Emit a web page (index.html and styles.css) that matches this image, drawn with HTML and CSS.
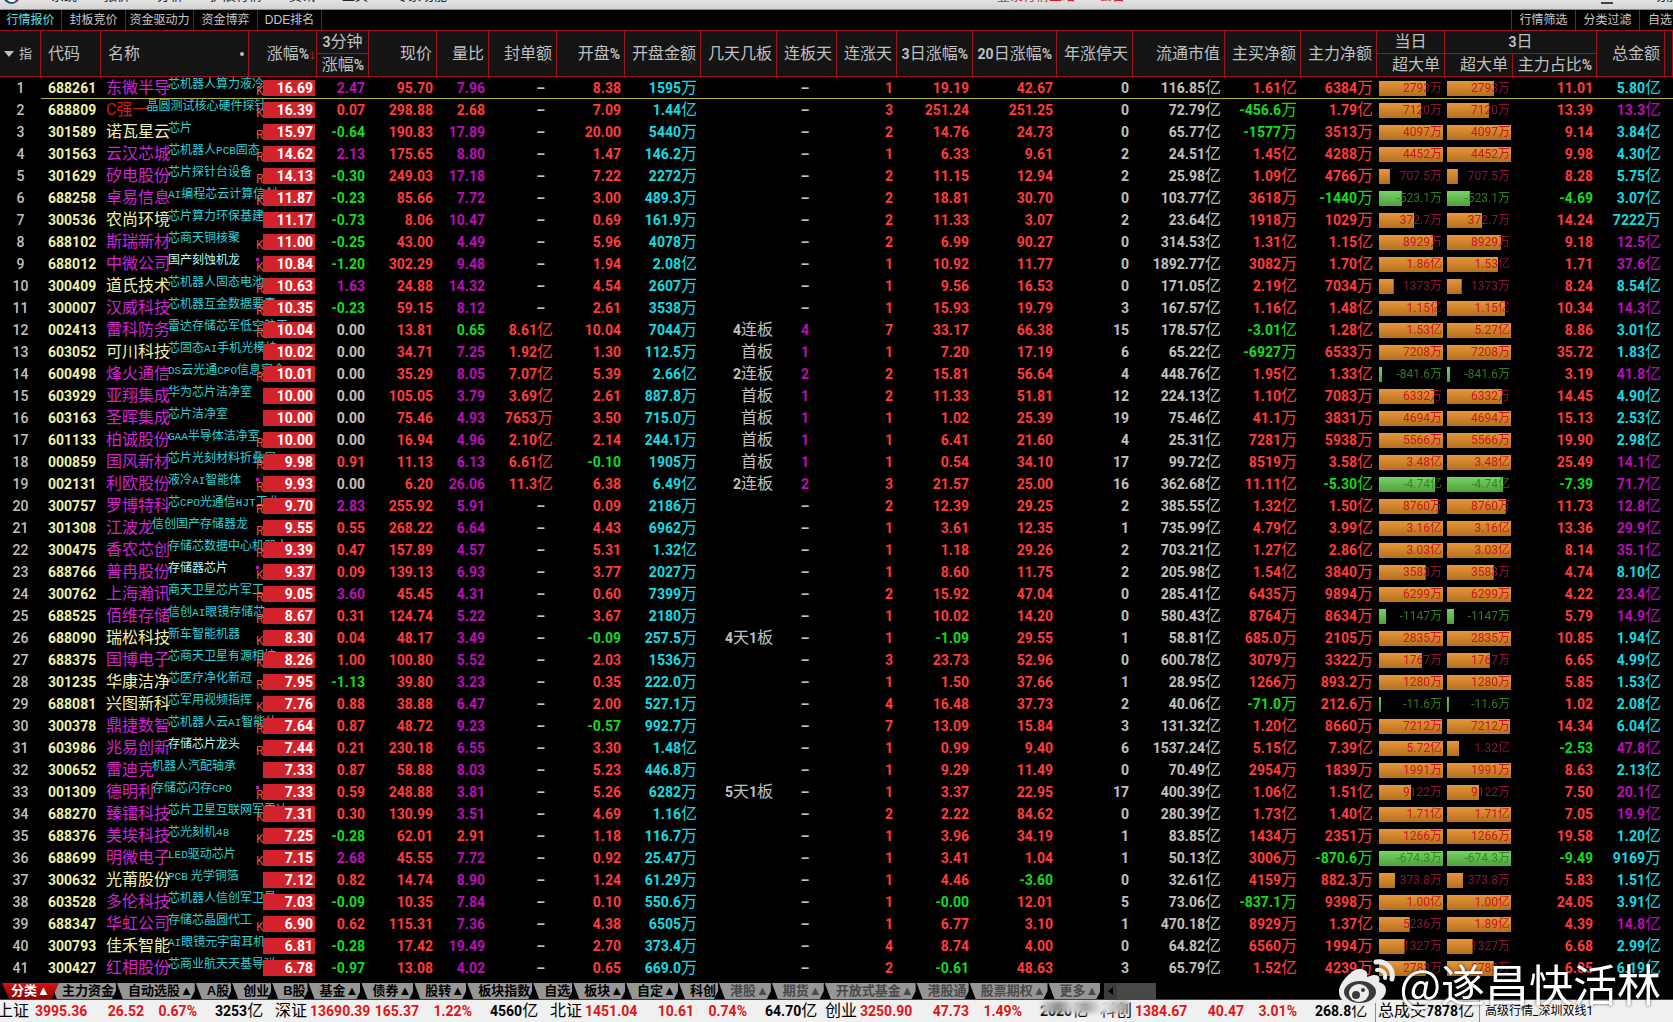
FILE: index.html
```html
<!DOCTYPE html>
<html lang="zh-CN">
  <head>
    <meta charset="UTF-8" />
    <meta name="viewport" content="width=device-width, initial-scale=1.0" />
    <title>行情报价</title>
    <link rel="stylesheet" href="styles.css">
  </head>
  <body>
    <!-- 顶部菜单 -->
    <header class="menu-bar">
      <svg class="menu-logo" viewBox="0 0 18 18">
        <circle cx="9" cy="9" r="9" fill="#1d4f8c" />
        <path d="M9 0a9 9 0 0 1 6 15L8 10z" fill="#d01c2c" />
        <path d="M3 8q6 8 11 3l-1 4q-6 3-10-3z" fill="#ffffff" />
      </svg>
      <nav class="menu-items">
        <a href="#">系统</a>
        <a href="#">报价</a>
        <a href="#">分析</a>
        <a href="#">扩展行情</a>
        <a href="#">资讯</a>
        <a href="#">工具</a>
        <a href="#">专家功能</a>
      </nav>
      <span class="menu-notice">登录行情主站</span>
      <span class="menu-notice-sub">公告</span>
      <span class="menu-min"></span>
      <a class="menu-end" href="#">功能</a>
    </header>

    <!-- 子页签 -->
    <nav class="sub-tabs">
      <button class="sub-tab active">行情报价</button>
      <button class="sub-tab">封板竞价</button>
      <button class="sub-tab wide">资金驱动力</button>
      <button class="sub-tab">资金博弈</button>
      <button class="sub-tab">DDE排名</button>
      <span class="spacer"></span>
      <button class="sub-tab tool">行情筛选</button>
      <button class="sub-tab tool">分类过滤</button>
      <button class="sub-tab tool last">自选管理</button>
    </nav>

    <!-- 行情表格 -->
    <main>
      <table class="quote-table">
        <colgroup>
          <col class="w-index" />
          <col class="w-60" />
          <col class="w-name" />
          <col class="w-68" />
          <col class="w-52" />
          <col class="w-68" />
          <col class="w-52" />
          <col class="w-68" />
          <col class="w-68" />
          <col class="w-76" />
          <col class="w-76" />
          <col class="w-60" />
          <col class="w-60" />
          <col class="w-76" />
          <col class="w-84" />
          <col class="w-76" />
          <col class="w-92" />
          <col class="w-76" />
          <col class="w-76" />
          <col class="w-68" />
          <col class="w-68" />
          <col class="w-84" />
          <col class="w-68" />
          <col />
        </colgroup>
        <thead>
          <tr>
            <th rowspan="2" class="index-head"><span class="sort-tri"></span>指</th>
            <th rowspan="2" class="left">代码</th>
            <th rowspan="2" class="left name-head">名称<i class="name-dot"></i></th>
            <th rowspan="2" class="sorted">涨幅<b>%</b><i class="sort-arrow">↓</i></th>
            <th class="center"><b>3</b>分钟</th>
            <th rowspan="2">现价</th>
            <th rowspan="2">量比</th>
            <th rowspan="2">封单额</th>
            <th rowspan="2">开盘<b>%</b></th>
            <th rowspan="2">开盘金额</th>
            <th rowspan="2">几天几板</th>
            <th rowspan="2">连板天</th>
            <th rowspan="2">连涨天</th>
            <th rowspan="2"><b>3</b>日涨幅<b>%</b></th>
            <th rowspan="2"><b>20</b>日涨幅<b>%</b></th>
            <th rowspan="2">年涨停天</th>
            <th rowspan="2">流通市值</th>
            <th rowspan="2">主买净额</th>
            <th rowspan="2">主力净额</th>
            <th class="center">当日</th>
            <th class="center" colspan="2"><b>3</b>日</th>
            <th rowspan="2">总金额</th>
            <th rowspan="2"></th>
          </tr>
          <tr>
            <th>涨幅<b>%</b></th>
            <th>超大单</th>
            <th>超大单</th>
            <th>主力占比<b>%</b></th>
          </tr>
        </thead>
        <tbody id="quotes"></tbody>
      </table>
    </main>

    <footer>
      <!-- 板块页签 -->
      <nav class="board-tabs">
        <button class="board-tab active">分类▲</button>
        <button class="board-tab">主力资金</button>
        <button class="board-tab">自动选股▲</button>
        <button class="board-tab">A股</button>
        <button class="board-tab">创业</button>
        <button class="board-tab">B股</button>
        <button class="board-tab">基金▲</button>
        <button class="board-tab">债券▲</button>
        <button class="board-tab">股转▲</button>
        <button class="board-tab">板块指数</button>
        <button class="board-tab">自选</button>
        <button class="board-tab">板块▲</button>
        <button class="board-tab">自定▲</button>
        <button class="board-tab">科创</button>
        <button class="board-tab dim">港股▲</button>
        <button class="board-tab dim">期货▲</button>
        <button class="board-tab dim">开放式基金▲</button>
        <button class="board-tab dim">港股通</button>
        <button class="board-tab dim">股票期权▲</button>
        <button class="board-tab dim">更多▲</button>
        <button class="scroll-left" aria-label="向左滚动"></button>
        <span class="scroll-thumb"></span>
      </nav>

      <!-- 指数状态栏 -->
      <div class="status-bar">
        <div class="market">
          <span class="label cut">上证</span><b class="up">3995.36</b><b class="up">26.52</b><b class="up">0.67%</b><span class="amount"><b>3253</b>亿</span>
        </div>
        <div class="market">
          <span class="label">深证</span><b class="up">13690.39</b><b class="up">165.37</b><b class="up">1.22%</b><span class="amount"><b>4560</b>亿</span>
        </div>
        <div class="market">
          <span class="label">北证</span><b class="up">1451.04</b><b class="up">10.61</b><b class="up">0.74%</b><span class="amount"><b>64.70</b>亿</span>
        </div>
        <div class="market">
          <span class="label">创业</span><b class="up">3250.90</b><b class="up">47.73</b><b class="up">1.49%</b><span class="amount smudged"><b>2020</b>亿</span>
        </div>
        <div class="market">
          <span class="label">科创</span><b class="up">1384.67</b><b class="up">40.47</b><b class="up">3.01%</b><span class="amount"><b>268.8</b>亿</span>
        </div>
        <div class="total">总成交<b>7878</b>亿</div>
        <div class="server">高级行情_深圳双线1</div>
      </div>
    </footer>

    <!-- 水印 -->
    <div class="watermark">
      <svg viewBox="0 0 58 48">
        <path d="M23 10c-6-2-22 12-22 23 0 9 10 14 22 14 15 0 25-8 25-16 0-5-4-7-7-8 2-5-1-10-12-5 1-5-1-7-6-8z" fill="#ececec" />
        <ellipse cx="22" cy="33" rx="16" ry="11" fill="#3a3a3a" />
        <ellipse cx="21" cy="34" rx="10" ry="9" fill="#ececec" />
        <circle cx="18" cy="36" r="4" fill="#3a3a3a" />
        <circle cx="25" cy="31" r="2" fill="#3a3a3a" />
        <path d="M38 3c9-2 18 6 16 17" fill="none" stroke="#ececec" stroke-width="5" stroke-linecap="round" />
        <path d="M39 11c5-1 9 3 8 8" fill="none" stroke="#ececec" stroke-width="4" stroke-linecap="round" />
      </svg>
      <span>@遂昌快活林</span>
    </div>

    <script>
      // 代码|名称|名称颜色|题材|标记|涨幅|3分钟|现价|量比|封单额|开盘%|开盘金额|几天几板|连板天|连涨天|3日|20日|年涨停|流通市值|主买|主力|超大单|宽度|3日超大单|宽度|占比|总金额
      // 颜色: m 紫 / y 黄 / r 红; 标记: K / R, * 带圆点, + 题材高亮
      const DATA = `
688261|东微半导|m|芯机器人算力液冷|K|16.69|2.47|95.70|7.96|–|8.38|1595万||–|1|19.19|42.67|0|116.85亿|1.61亿|6384万|2793万|74|2793万|74|11.01|5.80亿
688809|C强一|r|晶圆测试核心硬件探针|K|16.39|0.07|298.88|2.68|–|7.09|1.44亿||–|3|251.24|251.25|0|72.79亿|-456.6万|1.79亿|7120万|66|7120万|66|13.39|13.3亿
301589|诺瓦星云|y|芯片|R|15.97|-0.64|190.83|17.89|–|20.00|5440万||–|2|14.76|24.73|0|65.77亿|-1577万|3513万|4097万|100|4097万|100|9.14|3.84亿
301563|云汉芯城|m|芯机器人PCB固态|R|14.62|2.13|175.65|8.80|–|1.47|146.2万||–|1|6.33|9.61|2|24.51亿|1.45亿|4288万|4452万|100|4452万|100|9.98|4.30亿
301629|矽电股份|m|芯片探针台设备|R|14.13|-0.30|249.03|17.18|–|7.22|2272万||–|2|11.15|12.94|2|25.98亿|1.09亿|4766万|707.5万|17|707.5万|17|8.28|5.75亿
688258|卓易信息|m|AI编程芯云计算信创|K|11.87|-0.23|85.66|7.72|–|3.00|489.3万||–|2|18.81|30.70|0|103.77亿|3618万|-1440万|-523.1万|36|-523.1万|36|-4.69|3.07亿
300536|农尚环境|y|芯片算力环保基建||11.17|-0.73|8.06|10.47|–|0.69|161.9万||–|2|11.33|3.07|2|23.64亿|1918万|1029万|372.7万|55|372.7万|55|14.24|7222万
688102|斯瑞新材|m|芯商天铜核聚|K|11.00|-0.25|43.00|4.49|–|5.96|4078万||–|2|6.99|90.27|0|314.53亿|1.31亿|1.15亿|8929万|85|8929万|85|9.18|12.5亿
688012|中微公司|m|国产刻蚀机龙|K*+|10.84|-1.20|302.29|9.48|–|1.94|2.08亿||–|1|10.92|11.77|0|1892.77亿|3082万|1.70亿|1.86亿|100|1.53亿|80|1.71|37.6亿
300409|道氏技术|y|芯机器人固态电池|R|10.63|1.63|24.88|14.32|–|4.54|2607万||–|1|9.56|16.53|0|171.05亿|2.19亿|7034万|1373万|23|1373万|23|8.24|8.54亿
300007|汉威科技|m|芯机器互金数据要素|R|10.35|-0.23|59.15|8.12|–|2.61|3538万||–|1|15.93|19.79|3|167.57亿|1.16亿|1.48亿|1.15亿|91|1.15亿|91|10.34|14.3亿
002413|雷科防务|m|雷达存储芯军低空航天|R|10.04|0.00|13.81|0.65|8.61亿|10.04|7044万|4连板|4|7|33.17|66.38|15|178.57亿|-3.01亿|1.28亿|1.53亿|100|5.27亿|100|8.86|3.01亿
603052|可川科技|y|芯固态AI手机光模块||10.02|0.00|34.71|7.25|1.92亿|1.30|112.5万|首板|1|1|7.20|17.19|6|65.22亿|-6927万|6533万|7208万|100|7208万|100|35.72|1.83亿
600498|烽火通信|m|DS云光通CPO信息安全|R|10.01|0.00|35.29|8.05|7.07亿|5.39|2.66亿|2连板|2|2|15.81|56.64|4|448.76亿|1.95亿|1.33亿|-841.6万|5|-841.6万|5|3.19|41.8亿
603929|亚翔集成|m|华为芯片洁净室||10.00|0.00|105.05|3.79|3.69亿|2.61|887.8万|首板|1|2|11.33|51.81|12|224.13亿|1.10亿|7083万|6332万|86|6332万|86|14.45|4.90亿
603163|圣晖集成|m|芯片洁净室||10.00|0.00|75.46|4.93|7653万|3.50|715.0万|首板|1|1|1.02|25.39|19|75.46亿|41.1万|3831万|4694万|100|4694万|100|15.13|2.53亿
601133|柏诚股份|m|GAA半导体洁净室|R|10.00|0.00|16.94|4.96|2.10亿|2.14|244.1万|首板|1|1|6.41|21.60|4|25.31亿|7281万|5938万|5566万|100|5566万|100|19.90|2.98亿
000859|国风新材|m|芯片光刻材料折叠屏|R|9.98|0.91|11.13|6.13|6.61亿|-0.10|1905万|首板|1|1|0.54|34.10|17|99.72亿|8519万|3.58亿|3.48亿|100|3.48亿|100|25.49|14.1亿
002131|利欧股份|m|液冷AI智能体|R*|9.93|0.00|6.20|26.06|11.3亿|6.38|6.49亿|2连板|2|3|21.57|25.00|16|362.68亿|11.11亿|-5.30亿|-4.74亿|88|-4.74亿|88|-7.39|71.7亿
300757|罗博特科|m|芯CPO光通信HJT工业|R|9.70|2.83|255.92|5.91|–|0.09|2186万||–|2|12.39|29.25|2|385.55亿|1.32亿|1.50亿|8760万|92|8760万|92|11.73|12.8亿
301308|江波龙|m|信创国产存储器龙|R|9.55|0.55|268.22|6.64|–|4.43|6962万||–|1|3.61|12.35|1|735.99亿|4.79亿|3.99亿|3.16亿|100|3.16亿|100|13.36|29.9亿
300475|香农芯创|m|存储芯数据中心机器人|R|9.39|0.47|157.89|4.57|–|5.31|1.32亿||–|1|1.18|29.26|2|703.21亿|1.27亿|2.86亿|3.03亿|100|3.03亿|100|8.14|35.1亿
688766|普冉股份|m|存储器芯片|K*+|9.37|0.09|139.13|6.93|–|3.77|2027万||–|1|8.60|11.75|2|205.98亿|1.54亿|3840万|3583万|73|3583万|73|4.74|8.10亿
300762|上海瀚讯|m|商天卫星芯片军工|R|9.05|3.60|45.45|4.31|–|0.60|7399万||–|2|15.92|47.04|0|285.41亿|6435万|9894万|6299万|100|6299万|100|4.22|23.4亿
688525|佰维存储|m|信创AI眼镜存储芯|R|8.67|0.31|124.74|5.22|–|3.67|2180万||–|1|10.02|14.20|0|580.43亿|8764万|8634万|-1147万|11|-1147万|11|5.79|14.9亿
688090|瑞松科技|y|新车智能机器|K|8.30|0.04|48.17|3.49|–|-0.09|257.5万|4天1板|–|1|-1.09|29.55|1|58.81亿|685.0万|2105万|2835万|100|2835万|100|10.85|1.94亿
688375|国博电子|m|芯商天卫星有源相控|K|8.26|1.00|100.80|5.52|–|2.03|1536万||–|3|23.73|52.96|0|600.78亿|3079万|3322万|1767万|67|1767万|67|6.65|4.99亿
301235|华康洁净|y|芯医疗净化新冠|R|7.95|-1.13|39.80|3.23|–|0.35|222.0万||–|1|1.50|37.66|1|28.95亿|1266万|893.2万|1280万|100|1280万|100|5.85|1.53亿
688081|兴图新科|y|芯军用视频指挥|K|7.76|0.88|38.88|6.47|–|2.00|527.1万||–|4|16.48|37.73|2|40.06亿|-71.0万|212.6万|-11.6万|3|-11.6万|3|1.02|2.08亿
300378|鼎捷数智|m|芯机器人云AI智能体|R|7.64|0.87|48.72|9.23|–|-0.57|992.7万||–|7|13.09|15.84|3|131.32亿|1.20亿|8660万|7212万|99|7212万|99|14.34|6.04亿
603986|兆易创新|m|存储芯片龙头|R+|7.44|0.21|230.18|6.55|–|3.30|1.48亿||–|1|0.99|9.40|6|1537.24亿|5.15亿|7.39亿|5.72亿|100|1.32亿|19|-2.53|47.8亿
300652|雷迪克|m|机器人汽配轴承||7.33|0.87|58.88|8.03|–|5.23|446.8万||–|1|9.29|11.49|0|70.49亿|2954万|1839万|1991万|100|1991万|100|8.63|2.13亿
001309|德明利|m|存储芯闪存CPO|R*|7.33|0.59|248.88|3.81|–|5.26|6282万|5天1板|–|1|3.37|22.95|17|400.39亿|1.06亿|1.51亿|9122万|50|9122万|50|7.50|20.1亿
688270|臻镭科技|m|芯片卫星互联网军雷达|K|7.31|0.30|130.99|3.51|–|4.69|1.16亿||–|2|2.22|84.62|0|280.39亿|1.73亿|1.40亿|1.71亿|100|1.71亿|100|7.05|19.9亿
688376|美埃科技|m|芯光刻机48|K|7.25|-0.28|62.01|2.91|–|1.18|116.7万||–|1|3.96|34.19|1|83.85亿|1434万|2351万|1266万|100|1266万|100|19.58|1.20亿
688699|明微电子|m|LED驱动芯片|K|7.15|2.68|45.55|7.72|–|0.92|25.47万||–|1|3.41|1.04|1|50.13亿|3006万|-870.6万|-674.3万|100|-674.3万|100|-9.49|9169万
300632|光莆股份|y|PCB 光学铜箔||7.12|0.82|14.74|8.90|–|1.24|61.29万||–|1|4.46|-3.60|0|32.61亿|4159万|882.3万|373.8万|25|373.8万|25|5.83|1.51亿
603528|多伦科技|m|芯机器人信创军卫星||7.03|-0.09|10.35|7.84|–|0.10|550.6万||–|1|-0.00|12.01|5|73.06亿|-837.1万|9398万|1.00亿|100|1.00亿|100|24.05|3.91亿
688347|华虹公司|m|存储芯晶圆代工|K|6.90|0.62|115.31|7.36|–|4.38|6505万||–|1|6.77|3.10|1|470.18亿|8929万|1.37亿|5236万|48|1.89亿|100|4.39|14.8亿
300793|佳禾智能|y|AI眼镜元宇宙耳机||6.81|-0.28|17.42|19.49|–|2.70|373.4万||–|4|8.74|4.00|0|64.82亿|6560万|1994万|1327万|40|1327万|40|6.68|2.99亿
300427|红相股份|m|芯商业航天天基导弹||6.78|-0.97|13.08|4.02|–|0.65|669.0万||–|2|-0.61|48.63|3|65.79亿|1.52亿|4239万|2783万|73|2783万|73|6.85|6.19亿`;

      // 单位和汉字用细体
      const han = s => s.replace(/[\u4e00-\u9fff]+/g, '<span class="han">$&</span>');
      const latin = s => s.replace(/[A-Za-z0-9]+/g, '<span class="latin">$&</span>');
      const cell = (s, cls = '') => `<td class="${cls}">${han(s)}</td>`;
      const sign = s => {
        if (s === '–') return 'gray dash';
        return s.startsWith('-') ? 'green' : 'red';
      };
      const bar = (s, width) => {
        const cls = s.startsWith('-') ? 'bar down' : 'bar';
        return `<td class="bar-cell"><div class="${cls}" style="--w: ${width}%"><span>${s}</span></div></td>`;
      };
      const speed = s => {
        if (s === '0.00') return 'gray';
        return parseFloat(s) >= 1.5 ? 'purple' : sign(s);
      };
      const ratio = s => {
        const v = parseFloat(s);
        return v >= 3 ? 'purple' : v < 1 ? 'green' : 'red';
      };
      const total = s => (s.endsWith('亿') && parseFloat(s) >= 10 ? 'purple' : 'cyan');

      document.getElementById('quotes').innerHTML = DATA.trim()
        .split('\n')
        .map((line, i) => {
          const d = line.split('|');
          const mark = d[4].replace(/[*+]/g, '');
          const hot = d[4].includes('+') ? 'topic hot' : 'topic';
          const dot = d[4].includes('*') ? '<i class="mark-dot"></i>' : '';
          return `<tr>
            <td class="index">${i + 1}</td>
            <td class="code">${d[0]}</td>
            <td class="name"><div class="name-box"><span class="stock ${d[2]}">${d[1]}</span><span class="${hot}">${latin(d[3])}</span></div></td>
            <td class="rise-cell">${dot}<i class="mark">${mark}</i><span class="rise">${d[5]}</span></td>
            ${cell(d[6], speed(d[6]))}
            ${cell(d[7], 'red')}
            ${cell(d[8], ratio(d[8]))}
            ${cell(d[9], sign(d[9]))}
            ${cell(d[10], sign(d[10]))}
            ${cell(d[11], 'cyan')}
            ${cell(d[12], 'gray')}
            ${cell(d[13], d[13] === '–' ? 'gray center' : 'purple center')}
            ${cell(d[14], 'red')}
            ${cell(d[15], sign(d[15]))}
            ${cell(d[16], sign(d[16]))}
            ${cell(d[17], 'gray')}
            ${cell(d[18], 'gray')}
            ${cell(d[19], sign(d[19]))}
            ${cell(d[20], sign(d[20]))}
            ${bar(d[21], d[22])}
            ${bar(d[23], d[24])}
            ${cell(d[25], sign(d[25]))}
            ${cell(d[26], total(d[26]))}
            <td></td>
          </tr>`;
        })
        .join('');
    </script>
  </body>
</html>
```
FILE: styles.css
```css
* {
  box-sizing: border-box;
}

body {
  margin: 0;
  min-height: 100vh;
  display: flex;
  flex-direction: column;
  overflow: hidden;
  background: #000;
  color: #c0c0c0;
  font-family: Roboto, 'Noto Sans CJK SC', sans-serif;
  font-size: 14px;
}

a {
  color: inherit;
  text-decoration: none;
}

button {
  margin: 0;
  border: 0;
  font-family: 'Liberation Sans', 'Noto Sans CJK SC', sans-serif;
}

i {
  font-style: normal;
}

.spacer {
  flex: 1;
}

/* 顶部菜单, 只露出底边 */
.menu-bar {
  display: flex;
  align-items: flex-end;
  height: 10px;
  padding-left: 3px;
  overflow: hidden;
  background: linear-gradient(#e4e4e4, #d2d2d2);
  border-bottom: 1px solid #8a8a8a;
  color: #222;
  font-size: 13px;
  line-height: 16px;
}

.menu-bar > * {
  margin-bottom: 5px;
}

.menu-logo {
  width: 17px;
  height: 17px;
  flex: none;
}

.menu-items {
  display: flex;
  gap: 27px;
  margin-left: 31px;
}

.menu-notice {
  margin-left: auto;
  color: #d01c2c;
}

.menu-notice-sub {
  margin-left: 24px;
  color: #d01c2c;
}

.menu-min {
  width: 12px;
  height: 2px;
  margin-left: 476px;
  background: #444;
}

.menu-end {
  margin-left: 40px;
  width: 20px;
  white-space: nowrap;
}

/* 子页签 */
.sub-tabs {
  display: flex;
  height: 20px;
  overflow: hidden;
}

.sub-tab {
  flex: none;
  width: 64px;
  padding: 0;
  background: #000;
  border-right: 1px solid #a01018;
  color: #c8c8c8;
  font-size: 12px;
  line-height: 20px;
  white-space: nowrap;
}

.sub-tab.wide {
  width: 68px;
}

.sub-tab.active {
  width: 62px;
  color: #50e6e6;
}

.sub-tab.tool {
  border-right: 0;
  border-left: 1px solid #a01018;
}

.sub-tab.last {
  width: 34px;
  padding-left: 8px;
  overflow: hidden;
  text-align: left;
}

/* 行情表格 */
.quote-table {
  width: 100%;
  table-layout: fixed;
  border-spacing: 0;
  border-top: 1px solid #a01018;
}

.w-index { width: 41px; }
.w-52 { width: 52px; }
.w-60 { width: 60px; }
.w-68 { width: 68px; }
.w-76 { width: 76px; }
.w-84 { width: 84px; }
.w-92 { width: 92px; }
.w-name { width: 148px; }

th {
  height: 23px;
  padding: 0 4px 0 0;
  background: #141414;
  border-right: 1px solid #a01018;
  border-bottom: 1px solid #a01018;
  color: #c0c0c0;
  font-size: 16px;
  font-weight: 400;
  line-height: 20px;
  text-align: right;
  white-space: nowrap;
}

th b {
  font-size: 14px;
  font-weight: 700;
}

th.left {
  padding-left: 7px;
  text-align: left;
}

th.center {
  padding: 0;
  text-align: center;
}

th.index-head {
  font-size: 13px;
  padding-right: 8px;
}

.sort-tri {
  display: inline-block;
  margin-right: 5px;
  border: 5px solid transparent;
  border-top: 6px solid #c0c0c0;
  border-bottom: 0;
  vertical-align: middle;
}

.name-dot {
  float: right;
  width: 4px;
  height: 4px;
  margin-top: 8px;
  border-radius: 50%;
  background: #c0c0c0;
}

th.sorted {
  padding-right: 0;
}

.sort-arrow {
  display: inline-block;
  width: 7px;
  color: #e01c1c;
  font-family: 'Liberation Sans', sans-serif;
  font-size: 14px;
  text-indent: -4px;
}

td {
  height: 22px;
  padding: 0 4px 0 0;
  font-weight: 700;
  line-height: 22px;
  text-align: right;
  white-space: nowrap;
}

.han {
  font-size: 16px;
  font-weight: 400;
  line-height: 16px;
}

.index {
  padding: 0;
  font-weight: 500;
  text-align: center;
}

.code {
  padding: 0 0 0 7px;
  color: #f0f0a8;
  text-align: left;
}

.center {
  text-align: center;
}

.gray { color: #c0c0c0; }
.red { color: #ff3c3c; }
.green { color: #14dc1e; }
.purple { color: #b90fb9; }
.cyan { color: #14dce6; }
.dash { padding-right: 12px; }

/* 名称和题材 */
.name {
  padding: 0 0 0 5px;
  font-weight: 400;
}

.name-box {
  display: flex;
  height: 22px;
}

.stock {
  font-size: 16px;
}

.stock.m { color: #d223d2; }
.stock.y { color: #f0f0a8; }
.stock.r { color: #d21e1e; }

.topic {
  margin-left: -2px;
  color: #2ad2d7;
  font-size: 12px;
  font-weight: 400;
  line-height: 14px;
}

.topic.hot {
  color: #b4fafa;
}

.latin {
  font-family: 'Liberation Mono', monospace;
  font-size: 11px;
  line-height: 12px;
}

/* 涨幅 */
.rise-cell {
  padding: 0 2px 0 0;
  position: relative;
}

.rise {
  display: block;
  position: relative;
  width: 52px;
  height: 16px;
  margin-left: auto;
  padding-right: 2px;
  background: #d2232d;
  color: #fff;
  line-height: 16px;
}

.mark {
  position: absolute;
  left: 7px;
  top: 6px;
  color: #f0503c;
  font-size: 12px;
  font-weight: 400;
  line-height: 16px;
}

.mark-dot {
  position: absolute;
  left: 7px;
  top: 5px;
  width: 3px;
  height: 3px;
  background: #c814c8;
}

/* 超大单 */
.bar-cell {
  padding: 0 2px;
}

.bar {
  --text: #c8141e;
  --text-off: #8c1437;
  height: 15px;
  background: linear-gradient(#e8963a, #b4701e) 0 0 / var(--w) 100% no-repeat;
  font-size: 12px;
  font-weight: 400;
  line-height: 14px;
}

.bar.down {
  --text: #288c1e;
  --text-off: #327d1e;
  background-image: linear-gradient(#78d264, #50a03c);
}

.bar span {
  display: block;
  padding-right: 1px;
  background: linear-gradient(90deg, var(--text) var(--w), var(--text-off) var(--w));
  -webkit-background-clip: text;
  background-clip: text;
  color: var(--text);
  -webkit-text-fill-color: transparent;
}

/* 选中行 */
tbody tr:first-child td:not(.index) {
  box-shadow: inset 0 -1px #b4b43c;
}

/* 板块页签 */
footer {
  margin-top: auto;
}

.board-tabs {
  display: flex;
  height: 17px;
  padding-left: 2px;
  border-bottom: 1px solid #444;
}

.board-tab {
  flex: none;
  padding: 0 2px 0 12px;
  background: #969696;
  clip-path: polygon(1px 0, 100% 0, 100% 50%, calc(100% - 4px) 100%, 7px 100%);
  color: #000;
  font-size: 13px;
  font-weight: 700;
  line-height: 16px;
  white-space: nowrap;
}

.board-tab.active {
  position: relative;
  z-index: 1;
  margin-right: -9px;
  padding: 0 9px;
  background: linear-gradient(#d21414, #8c0000);
  clip-path: polygon(0 0, 100% 0, calc(100% - 7px) 100%, 7px 100%);
  color: #fff;
}

.board-tab.dim {
  color: #4a4a4a;
}

.scroll-left {
  width: 13px;
  margin-left: 4px;
  padding: 0;
  background: #3c3c3c;
}

.scroll-left::before {
  content: '';
  display: block;
  width: 0;
  margin: 0 auto;
  border: 4px solid transparent;
  border-right: 5px solid #000;
  border-left: 0;
}

.scroll-thumb {
  width: 39px;
  background: #484848;
}

/* 指数状态栏 */
.status-bar {
  display: flex;
  height: 22px;
  overflow: hidden;
  background: #f0f0f0;
  color: #000;
  font-size: 16px;
  font-weight: 400;
  line-height: 22px;
  white-space: nowrap;
}

.status-bar b {
  font-size: 14px;
  font-weight: 700;
}

.market {
  flex: none;
  display: grid;
  grid-template-columns: 35px 61px 48px 53px 18px 60px;
  width: 275px;
}

.market .label.cut {
  margin-left: -3px;
}

.market .up {
  color: #e11414;
}

.market .up + .up {
  text-align: right;
}

.amount {
  grid-column: 6;
}

.smudged {
  position: relative;
  z-index: 1;
}

.smudged::after {
  content: '';
  position: absolute;
  top: 1px;
  left: 2px;
  width: 86px;
  height: 12px;
  background: linear-gradient(90deg, #d0d0d0, #8a8a8a 16px, #d8d8d8 30px, #a0a0a0 44px, #ececec 60px, #9a9a9a);
  filter: blur(2px);
}

.total {
  flex: none;
  width: 104px;
  padding-left: 2px;
  border-left: 1px solid #8c8c8c;
}

.server {
  flex: 1;
  padding-left: 5px;
  border-left: 1px solid #8c8c8c;
  font-size: 12px;
}

/* 水印 */
.watermark {
  position: fixed;
  right: 12px;
  bottom: 14px;
  display: flex;
  align-items: center;
  gap: 3px;
  color: #fff;
  font-family: 'Noto Sans CJK SC', sans-serif;
  font-size: 44px;
  font-weight: 400;
  line-height: 50px;
  text-shadow: 0 0 3px rgba(0, 0, 0, 0.7);
}

.watermark svg {
  width: 58px;
  height: 48px;
}
```
